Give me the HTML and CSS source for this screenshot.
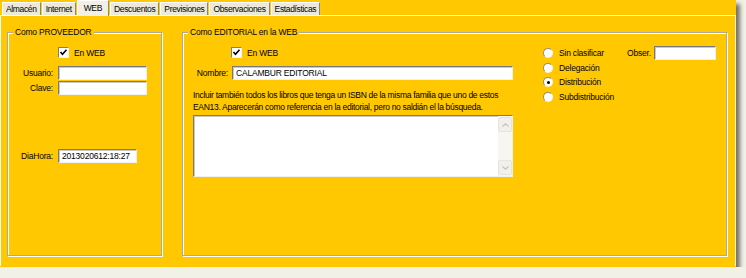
FILE: index.html
```html
<!DOCTYPE html>
<html>
<head>
    <meta charset="UTF-8">
    <title>Editorial - WEB</title>
    <link rel="stylesheet" href="styles.css">
</head>
<body>
    <div class="window">
        <div class="tabs">
            <div class="tab">Almacén</div>
            <div class="tab">Internet</div>
            <div class="tab active">WEB</div>
            <div class="tab">Descuentos</div>
            <div class="tab">Previsiones</div>
            <div class="tab">Observaciones</div>
            <div class="tab">Estadísticas</div>
        </div>

        <div class="page">
            <fieldset class="group group-prov">
                <legend>Como PROVEEDOR</legend>
                <label class="check-row prov-check">
                    <span class="check">
                        <svg viewBox="0 0 9 9"><path d="M1.5 4 L3.5 6.2 L7.5 1.8" fill="none" stroke="#000" stroke-width="1.6"></path></svg>
                    </span>
                    En WEB
                </label>
                <div class="field">
                    <span class="lbl prov-lbl">Usuario:</span>
                    <input class="input prov-input" type="text">
                </div>
                <div class="field field-clave">
                    <span class="lbl prov-lbl">Clave:</span>
                    <input class="input prov-input" type="text">
                </div>
                <div class="field field-date">
                    <span class="lbl prov-lbl">DiaHora:</span>
                    <input class="input date-input" type="text" value="2013020612:18:27">
                </div>
            </fieldset>

            <fieldset class="group group-edit">
                <legend>Como EDITORIAL en la WEB</legend>
                <div class="edit-main">
                    <label class="check-row edit-check">
                        <span class="check">
                            <svg viewBox="0 0 9 9"><path d="M1.5 4 L3.5 6.2 L7.5 1.8" fill="none" stroke="#000" stroke-width="1.6"></path></svg>
                        </span>
                        En WEB
                    </label>
                    <div class="field">
                        <span class="lbl edit-lbl">Nombre:</span>
                        <input class="input name-input" type="text" value="CALAMBUR EDITORIAL">
                    </div>
                    <p class="hint">Incluir también todos los libros que tenga un ISBN de la misma familia que uno de estos EAN13. Aparecerán como referencia en la editorial, pero no saldián el la búsqueda.</p>
                    <div class="memo">
                        <div class="memo-text"></div>
                        <div class="scrollbar">
                            <div class="scroll-btn">
                                <svg viewBox="0 0 7 4"><path d="M0.5 3.5 L3.5 0.8 L6.5 3.5" fill="none" stroke="#c3c3c3" stroke-width="1.2"></path></svg>
                            </div>
                            <div class="scroll-btn">
                                <svg viewBox="0 0 7 4"><path d="M0.5 0.5 L3.5 3.2 L6.5 0.5" fill="none" stroke="#c3c3c3" stroke-width="1.2"></path></svg>
                            </div>
                        </div>
                    </div>
                </div>

                <div class="edit-side">
                    <div class="radios">
                        <div class="radio-row"><span class="radio"></span>Sin clasificar</div>
                        <div class="radio-row"><span class="radio"></span>Delegación</div>
                        <div class="radio-row"><span class="radio checked"></span>Distribución</div>
                        <div class="radio-row"><span class="radio"></span>Subdistribución</div>
                    </div>
                    <div class="field obser">
                        <span class="lbl obser-lbl">Obser.</span>
                        <input class="input obser-input" type="text">
                    </div>
                </div>
            </fieldset>
        </div>
    </div>
</body>
</html>
```

FILE: styles.css
```css
body {
    margin: 0;
    background-color: #f2f1e7;
    font-family: "Liberation Sans", Arial, sans-serif;
    font-size: 8.5px;
    letter-spacing: -0.2px;
    color: #000;
}

.window {
    width: 736px;
    height: 267px;
    background-color: #ffc800;
    box-shadow: 4px 4px 4px rgba(60, 60, 60, 0.7);
}

/* tab strip */

.tabs {
    display: flex;
    align-items: flex-end;
    height: 15px;
    padding-left: 2px;
    letter-spacing: -0.35px;
}

.tab {
    height: 12px;
    line-height: 12px;
    padding: 0 3px;
    margin-right: 1px;
    background-color: #ece9d8;
    border-top: 1px solid #fff;
    border-left: 1px solid #fff;
    border-right: 1px solid #8a877a;
}

.tab.active {
    height: 15px;
    line-height: 14px;
    padding: 0 6px;
    margin: 0 1px 0 0;
    background-color: #f1efe6;
    position: relative;
    top: 1px;
}

/* page */

.page {
    display: flex;
    align-items: flex-start;
    height: 251px;
    box-sizing: border-box;
    padding: 10px 0 0 6px;
    border-top: 1px solid #fff;
    border-left: 1px solid #fff;
    border-right: 1px solid #fff3c0;
}

.group {
    box-sizing: border-box;
    height: 230px;
    margin: 0;
    padding: 0;
    border: 1px solid #a9a9a9;
    box-shadow: 1px 1px 0 #fff, inset 1px 1px 0 #fff;
}

.group legend {
    margin-left: 5px;
    padding: 0 2px;
    line-height: 12px;
    background-color: #ffc800;
}

.group-prov {
    width: 155px;
}

.group-edit {
    display: flex;
    align-items: flex-start;
    width: 545px;
    margin-left: 20px;
}

/* controls */

.check-row {
    display: flex;
    align-items: center;
    height: 13px;
    margin-top: 8px;
}

.check {
    display: inline-flex;
    width: 9px;
    height: 9px;
    margin-right: 5px;
    background-color: #fff;
    border-top: 1px solid #808080;
    border-left: 1px solid #808080;
    border-bottom: 1px solid #f4f4f4;
    border-right: 1px solid #f4f4f4;
}

.check svg {
    width: 9px;
    height: 9px;
}

.prov-check {
    padding-left: 50px;
    margin-bottom: 7px;
}

.field {
    display: flex;
    align-items: center;
    height: 14px;
}

.lbl {
    text-align: right;
    margin-right: 5px;
    white-space: nowrap;
}

.prov-lbl {
    width: 45px;
}

.input {
    box-sizing: border-box;
    height: 14px;
    padding: 0 0 0 3px;
    font-family: inherit;
    font-size: inherit;
    letter-spacing: inherit;
    color: #000;
    background-color: #fff;
    border: none;
    border-top: 1px solid #7a7a7a;
    border-left: 1px solid #7a7a7a;
    border-bottom: 1px solid #f0f0f0;
    border-right: 1px solid #f0f0f0;
    box-shadow: inset 1px 1px 0 #c9c9c9;
    outline: none;
}

.prov-input {
    width: 89px;
}

.field-clave {
    margin-top: 1px;
}

.field-date {
    margin-top: 54px;
}

.date-input {
    width: 79px;
}

.edit-main {
    padding-left: 10px;
}

.edit-check {
    padding-left: 38px;
    margin-bottom: 7px;
}

.edit-lbl {
    width: 35px;
    margin-right: 4px;
}

.name-input {
    width: 281px;
}

.hint {
    width: 320px;
    margin: 9px 0 2px 0;
    line-height: 12px;
    letter-spacing: -0.3px;
}

.memo {
    display: flex;
    width: 320px;
    height: 62px;
    box-sizing: border-box;
    background-color: #fff;
    border-top: 1px solid #7a7a7a;
    border-left: 1px solid #7a7a7a;
    border-bottom: 1px solid #f0f0f0;
    border-right: 1px solid #f0f0f0;
    box-shadow: inset 1px 1px 0 #c9c9c9;
}

.memo-text {
    flex: 1;
}

.scrollbar {
    display: flex;
    flex-direction: column;
    justify-content: space-between;
    width: 14px;
    padding: 1px 0;
    background-color: #f7f6f1;
}

.scroll-btn {
    display: flex;
    align-items: center;
    justify-content: center;
    height: 13px;
    background-color: #f1f0ea;
    border: 1px solid #e6e4dc;
    border-radius: 2px;
}

.scroll-btn svg {
    width: 7px;
    height: 4px;
}

.edit-side {
    display: flex;
    align-items: flex-start;
    margin: 8px 0 0 30px;
}

.radios {
    width: 84px;
}

.radio-row {
    display: flex;
    align-items: center;
    height: 14.5px;
    white-space: nowrap;
}

.radio {
    position: relative;
    width: 8px;
    height: 8px;
    margin-right: 6px;
    border-radius: 50%;
    background-color: #fff;
    border: 1px solid;
    border-color: #8c8c8c #f2f2f2 #f2f2f2 #8c8c8c;
}

.radio.checked:after {
    content: "";
    position: absolute;
    left: 2.5px;
    top: 2.5px;
    width: 3px;
    height: 3px;
    border-radius: 50%;
    background-color: #000;
}

.obser-lbl {
    width: 27px;
    margin-right: 0;
    text-align: left;
}

.obser-input {
    width: 62px;
}
```
